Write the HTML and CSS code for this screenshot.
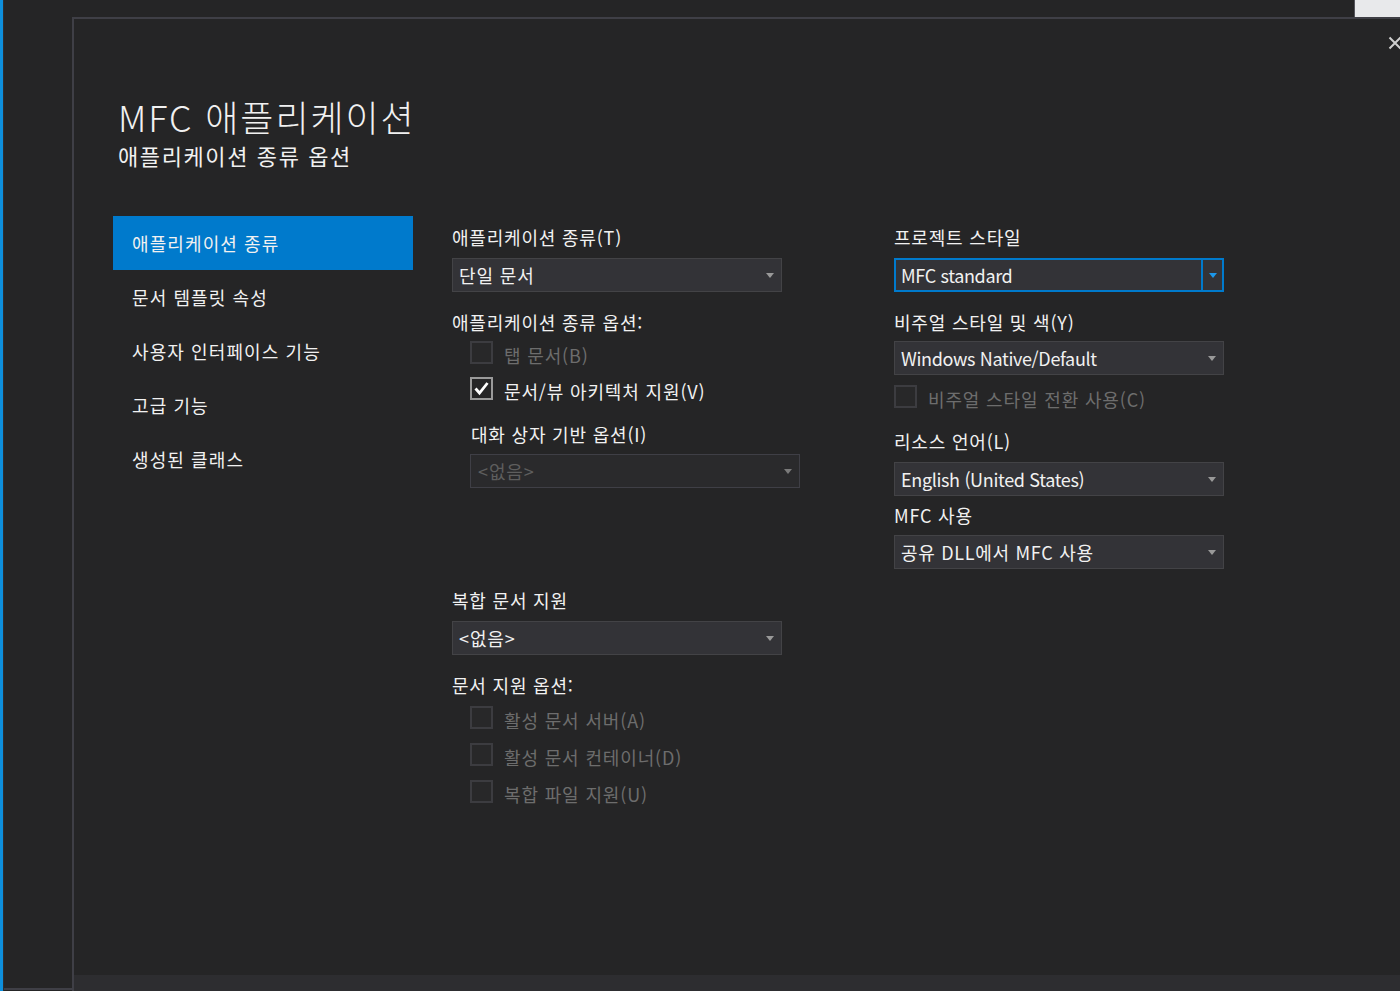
FILE: index.html
```html
<!DOCTYPE html>
<html lang="ko">
<head>
<meta charset="utf-8">
<title>MFC 애플리케이션</title>
<link rel="stylesheet" href="styles.css">
</head>
<body>
<div class="screen">
  <div class="strip"></div>
  <div class="backpane"><div class="backpane-line"></div></div>
  <div class="main">
    <div class="topbar"><div class="topbar-light"></div></div>
    <div class="dialog">
      <div class="close" aria-label="닫기">
        <svg width="14" height="14" viewBox="0 0 14 14"><path d="M1.5 1.5 L12.5 12.5 M12.5 1.5 L1.5 12.5" stroke="#cfcfcf" stroke-width="2" fill="none"/></svg>
      </div>
      <header class="header">
        <h1 class="title">MFC 애플리케이션</h1>
        <div class="subtitle">애플리케이션 종류 옵션</div>
      </header>
      <div class="body">
        <nav class="nav">
          <div class="nav-item active">애플리케이션 종류</div>
          <div class="nav-item">문서 템플릿 속성</div>
          <div class="nav-item">사용자 인터페이스 기능</div>
          <div class="nav-item">고급 기능</div>
          <div class="nav-item">생성된 클래스</div>
        </nav>
        <div class="col col-mid">
          <div class="label">애플리케이션 종류(T)</div>
          <div class="select m9"><span>단일 문서</span><i class="arrow"></i></div>
          <div class="label m18">애플리케이션 종류 옵션:</div>
          <div class="check disabled m6"><span class="box"></span><span class="txt">탭 문서(B)</span></div>
          <div class="check checked m12"><span class="box"><svg width="19" height="19" viewBox="0 0 19 19"><path d="M3.5 9.5 L7.5 14 L15.5 4" stroke="#ffffff" stroke-width="2.8" fill="none"/></svg></span><span class="txt">문서/뷰 아키텍처 지원(V)</span></div>
          <div class="label indent m22">대화 상자 기반 옵션(I)</div>
          <div class="select disabled indent-box m8"><span>&lt;없음&gt;</span><i class="arrow"></i></div>
          <div class="label m100">복합 문서 지원</div>
          <div class="select m9"><span>&lt;없음&gt;</span><i class="arrow"></i></div>
          <div class="label m18">문서 지원 옵션:</div>
          <div class="check disabled m8"><span class="box"></span><span class="txt">활성 문서 서버(A)</span></div>
          <div class="check disabled m13"><span class="box"></span><span class="txt">활성 문서 컨테이너(D)</span></div>
          <div class="check disabled m13"><span class="box"></span><span class="txt">복합 파일 지원(U)</span></div>
        </div>
        <div class="col col-right">
          <div class="label">프로젝트 스타일</div>
          <div class="select focused latin m9"><span>MFC standard</span><span class="drop"><i class="arrow"></i></span></div>
          <div class="label m18">비주얼 스타일 및 색(Y)</div>
          <div class="select latin m7"><span>Windows Native/Default</span><i class="arrow"></i></div>
          <div class="check disabled m9"><span class="box"></span><span class="txt">비주얼 스타일 전환 사용(C)</span></div>
          <div class="label m21">리소스 언어(L)</div>
          <div class="select latin m9"><span>English (United States)</span><i class="arrow"></i></div>
          <div class="label m7">MFC 사용</div>
          <div class="select mixed m8"><span>공유 DLL에서 MFC 사용</span><i class="arrow"></i></div>
        </div>
      </div>
      <div class="footer"></div>
    </div>
  </div>
</div>
</body>
</html>
```

FILE: styles.css
```css
* { box-sizing: border-box; }
html, body {
  margin: 0;
  padding: 0;
  width: 1400px;
  height: 991px;
  overflow: hidden;
  background: #252526;
  font-family: "Noto Sans CJK KR", "Noto Sans", sans-serif;
  color: #f1f1f1;
}
.screen {
  display: flex;
  width: 1400px;
  height: 991px;
}
.strip {
  width: 3px;
  background: #0e8fdc;
  flex: none;
}
.backpane {
  width: 69px;
  flex: none;
  display: flex;
  flex-direction: column;
  justify-content: flex-end;
  border-left: 1px solid #2e2e30;
}
.backpane-line {
  height: 2px;
  margin-bottom: 1px;
  background: #3f3f46;
}
.main {
  flex: 1;
  display: flex;
  flex-direction: column;
  min-width: 0;
}
.topbar {
  height: 17px;
  flex: none;
  display: flex;
  justify-content: flex-end;
}
.topbar-light {
  width: 46px;
  background: #e8e9eb;
  border-left: 1px solid #55555c;
}
.dialog {
  position: relative;
  flex: 1;
  display: flex;
  flex-direction: column;
  border-top: 2px solid #3f3f46;
  border-left: 2px solid #3f3f46;
}
.close {
  position: absolute;
  left: 1314px;
  top: 17px;
  width: 14px;
  height: 14px;
}
.close svg { display: block; }
.header {
  padding: 75px 0 0 44px;
}
.title {
  margin: 0;
  font-size: 36px;
  line-height: 44px;
  font-weight: 300;
  letter-spacing: 1.9px;
  color: #f1f1f1;
}
.subtitle {
  margin-top: 2px;
  font-size: 22px;
  line-height: 30px;
  letter-spacing: 1.6px;
  color: #f1f1f1;
}
.body {
  flex: 1;
  display: flex;
  padding: 46px 0 0 39px;
}
.nav {
  width: 300px;
  flex: none;
  display: flex;
  flex-direction: column;
}
.nav-item {
  height: 54px;
  display: flex;
  align-items: center;
  padding-left: 19px;
  font-size: 18px;
  letter-spacing: 1.1px;
  color: #f1f1f1;
}
.nav-item.active {
  background: #007acc;
}
.col {
  display: flex;
  flex-direction: column;
  padding-top: 9px;
}
.col-mid {
  width: 348px;
  margin-left: 39px;
}
.col-right {
  width: 330px;
  margin-left: 94px;
}
.label {
  font-size: 18px;
  line-height: 24px;
  height: 24px;
  letter-spacing: 0.8px;
  white-space: nowrap;
}
.indent { padding-left: 19px; }
.indent-box { margin-left: 18px; }
.select {
  width: 330px;
  height: 34px;
  flex: none;
  display: flex;
  align-items: center;
  justify-content: space-between;
  background: #333337;
  border: 1px solid #434346;
  padding: 0 7px 0 6px;
  font-size: 18px;
  line-height: 32px;
  letter-spacing: 0.9px;
  color: #f1f1f1;
  white-space: nowrap;
}
.select.latin { letter-spacing: -0.35px; }
.select.mixed { letter-spacing: 0.7px; }
.arrow {
  display: block;
  width: 0;
  height: 0;
  border-left: 4px solid transparent;
  border-right: 4px solid transparent;
  border-top: 5px solid #999999;
}
.select.disabled {
  background: #2a2a2c;
  border-color: #3f3f46;
  color: #5e5e5e;
  padding-left: 7px;
}
.select.disabled .arrow { border-top-color: #7a7a7a; }
.select.focused {
  border: 2px solid #007acc;
  padding-right: 0;
  padding-left: 5px;
}
.drop {
  align-self: stretch;
  width: 21px;
  border-left: 2px solid #007acc;
  display: flex;
  align-items: center;
  justify-content: center;
}
.drop .arrow { border-top-color: #1c97ea; }
.check {
  height: 24px;
  display: flex;
  align-items: center;
  padding-left: 18px;
  font-size: 18px;
  line-height: 24px;
  letter-spacing: 0.85px;
  white-space: nowrap;
}
.check .txt { margin-top: 5px; }
.col-right .check { padding-left: 0; }
.box {
  width: 23px;
  height: 23px;
  flex: none;
  margin-right: 11px;
  border: 2px solid #3c3c40;
  background: #282829;
  display: flex;
  align-items: center;
  justify-content: center;
}
.box svg { display: block; }
.check.disabled { color: #6d6d6d; }
.check.checked .box {
  border-color: #9a9a9a;
  background: #252526;
}
.m6 { margin-top: 6px; }
.m7 { margin-top: 7px; }
.m8 { margin-top: 8px; }
.m9 { margin-top: 9px; }
.m12 { margin-top: 12px; }
.m13 { margin-top: 13px; }
.m18 { margin-top: 18px; }
.m21 { margin-top: 21px; }
.m22 { margin-top: 22px; }
.m100 { margin-top: 100px; }
.footer {
  height: 16px;
  flex: none;
  background: #2d2d30;
}
```
